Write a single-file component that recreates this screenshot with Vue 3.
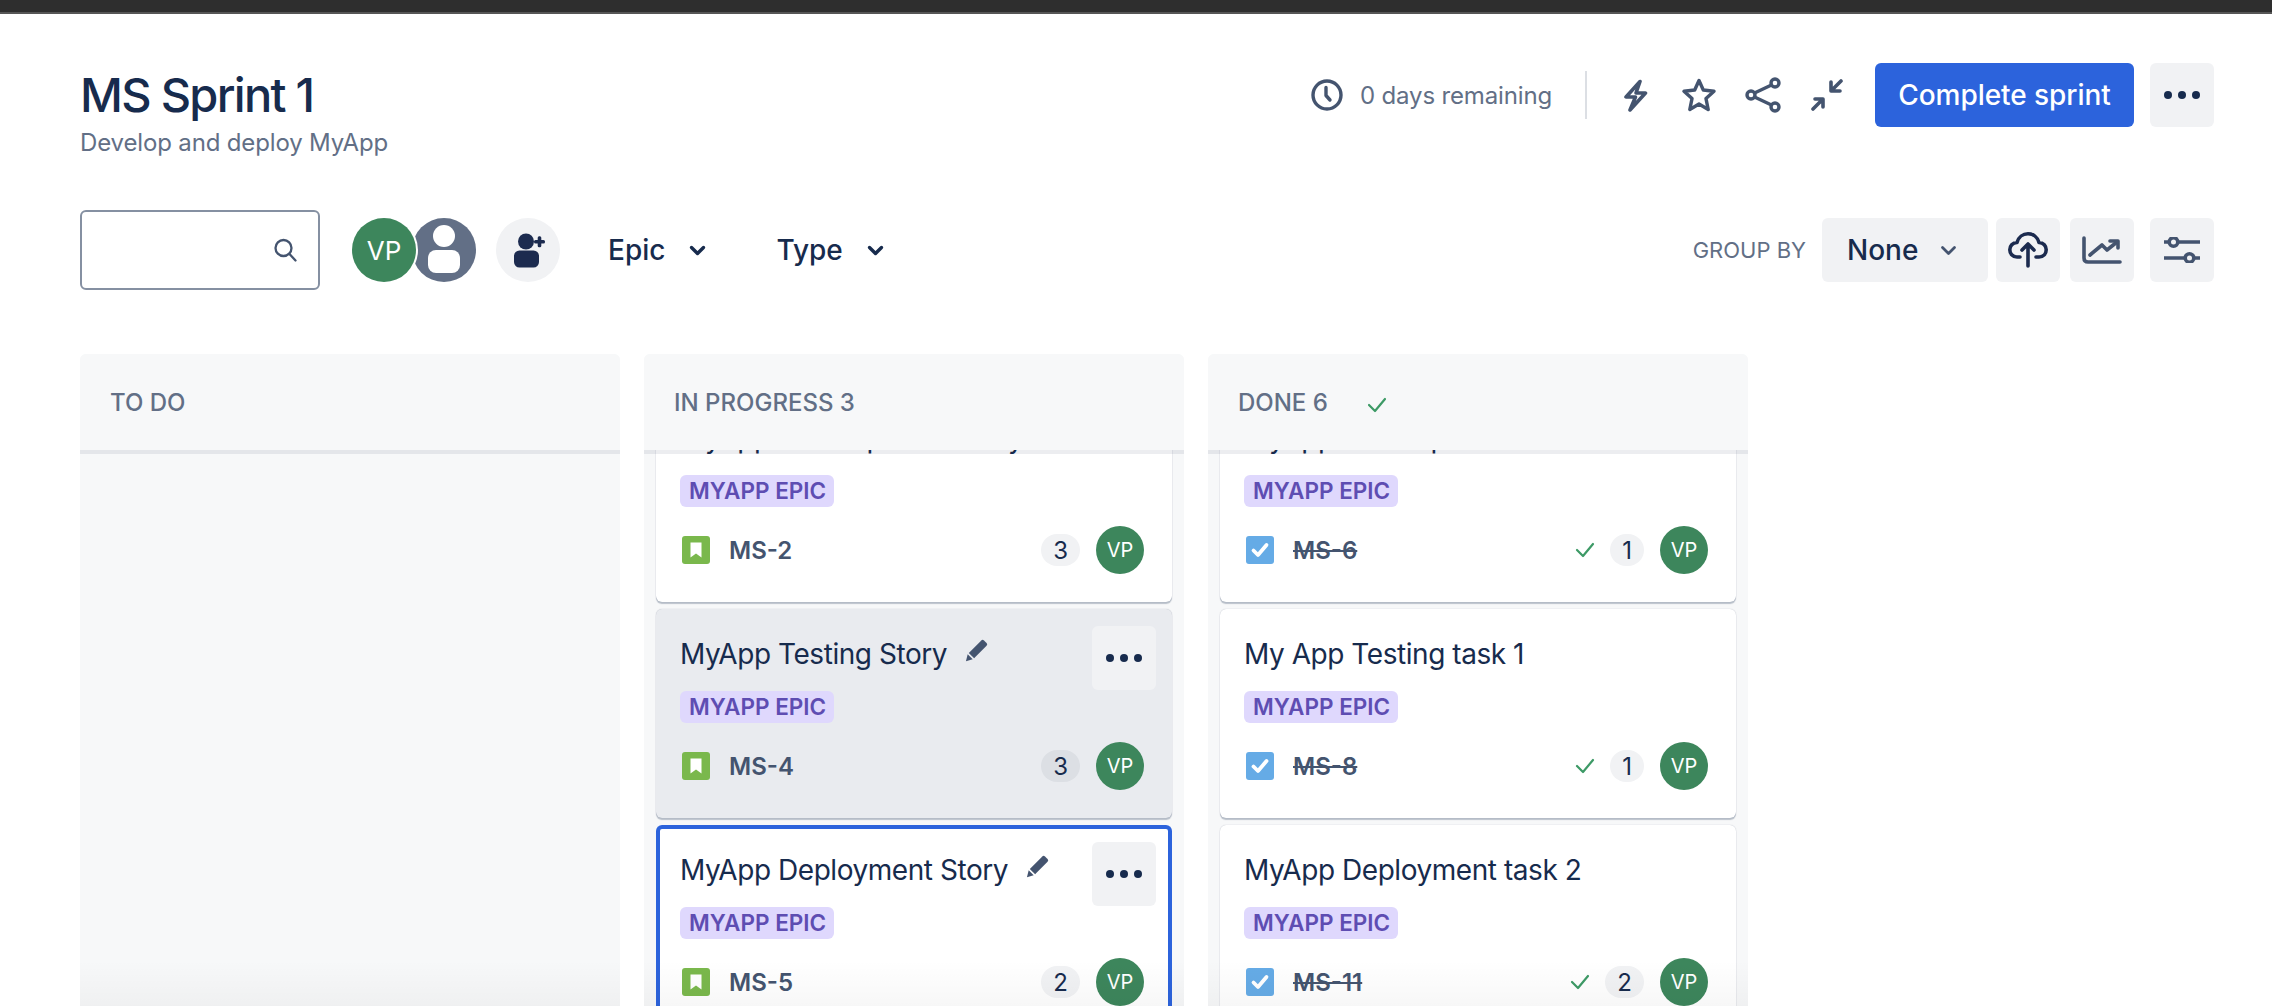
<script setup>
const cols = [
  { name: 'TO DO', done: false, cards: [] },
  {
    name: 'IN PROGRESS 3',
    done: false,
    cards: [
      { title: 'MyApp Development Story', key: 'MS-2', count: 3, type: 'story' },
      { title: 'MyApp Testing Story', key: 'MS-4', count: 3, type: 'story', state: 'hover' },
      { title: 'MyApp Deployment Story', key: 'MS-5', count: 2, type: 'story', state: 'selected' },
    ],
  },
  {
    name: 'DONE 6',
    done: true,
    cards: [
      { title: 'MyApp Development task 1', key: 'MS-6', count: 1, type: 'task' },
      { title: 'My App Testing task 1', key: 'MS-8', count: 1, type: 'task' },
      { title: 'MyApp Deployment task 2', key: 'MS-11', count: 2, type: 'task' },
    ],
  },
]
</script>

<template>
  <div class="page">
    <div class="topbar"></div>

    <header class="head">
      <div>
        <h1 class="title">MS Sprint 1</h1>
        <p class="sub">Develop and deploy MyApp</p>
      </div>
      <div class="head-right">
        <svg class="i-clock" viewBox="0 0 32 32" fill="none" stroke="#44546f" stroke-width="3.4" stroke-linecap="round" stroke-linejoin="round">
          <circle cx="16" cy="16" r="14" /><path d="M15 8.500V16.500L19 21" />
        </svg>
        <span class="remaining">0 days remaining</span>
        <span class="divider"></span>
        <svg class="i-bolt" viewBox="0 0 25 33" fill="none" stroke="#44546f" stroke-width="3.600" stroke-linejoin="round" stroke-linecap="round">
          <path d="M17 2.500 3 18h9.500L7 31 22.500 14H13z" />
        </svg>
        <svg class="i-star" viewBox="0 0 34 34" fill="none" stroke="#44546f" stroke-width="3.400" stroke-linejoin="round">
          <path d="M17 2.500 21.300 12 32 13.300 24 20.600 26.200 31.500 17 26 7.800 31.500 10 20.600 2 13.300 12.700 12z" />
        </svg>
        <svg class="i-share" viewBox="0 0 36 36" fill="none" stroke="#44546f" stroke-width="3.400">
          <circle cx="6" cy="18" r="4" /><circle cx="30" cy="6" r="4" /><circle cx="30" cy="30" r="4" />
          <path d="M9.500 16 26.500 8M9.500 20 26.500 28" />
        </svg>
        <svg class="i-collapse" viewBox="0 0 32 32" fill="none" stroke="#44546f" stroke-width="3.600" stroke-linecap="round" stroke-linejoin="round">
          <path d="M30 2 21 11M20 3v9h9M2 30 11 21M4 20h8v8" />
        </svg>
        <button class="primary">Complete sprint</button>
        <button class="square more">
          <svg viewBox="0 0 36 8" class="dots"><circle cx="4" cy="4" r="4" /><circle cx="18" cy="4" r="4" /><circle cx="32" cy="4" r="4" /></svg>
        </button>
      </div>
    </header>

    <div class="toolbar">
      <div class="search">
        <svg viewBox="0 0 24 24" fill="none" stroke="#44546f" stroke-width="2.300" stroke-linecap="round">
          <circle cx="10.500" cy="10" r="8" /><path d="m16.500 16 6 6.500" />
        </svg>
      </div>
      <div class="avatars">
        <span class="av-vp">VP</span>
        <span class="av-user">
          <svg viewBox="0 0 64 64" fill="#fff">
            <circle cx="32" cy="18" r="11" /><rect x="16" y="32" width="32" height="23" rx="8" />
          </svg>
        </span>
      </div>
      <span class="add">
        <svg viewBox="0 0 34 36" fill="#1c2b4f">
          <circle cx="15" cy="9.500" r="8" /><rect x="3" y="18.500" width="25" height="17" rx="5.500" />
          <rect x="23" y="8" width="11" height="3.600" rx="1.500" /><rect x="26.700" y="4.300" width="3.600" height="11" rx="1.500" />
        </svg>
      </span>
      <span class="filter epic">Epic
        <svg class="chev" viewBox="0 0 17 11" fill="none" stroke="#172b4d" stroke-width="3.400" stroke-linecap="round" stroke-linejoin="round"><path d="m2.500 2.500 6 6 6-6" /></svg>
      </span>
      <span class="filter type">Type
        <svg class="chev" viewBox="0 0 17 11" fill="none" stroke="#172b4d" stroke-width="3.400" stroke-linecap="round" stroke-linejoin="round"><path d="m2.500 2.500 6 6 6-6" /></svg>
      </span>
      <div class="toolbar-right">
        <span class="groupby">GROUP BY</span>
        <button class="none">None
          <svg class="chev" viewBox="0 0 17 11" fill="none" stroke="#44546f" stroke-width="2.800" stroke-linecap="round" stroke-linejoin="round"><path d="m2.500 2.500 6 6 6-6" /></svg>
        </button>
        <button class="square upload">
          <svg viewBox="0 0 40 36" fill="none" stroke="#1c2b4f" stroke-width="3.600" stroke-linecap="round" stroke-linejoin="round">
            <path d="M12 25H9C4.500 25 1.800 21.500 1.800 17.800S4.500 10.500 9 10.500C10.500 5 15 1.800 20 1.800 25 1.800 29.500 5 31 10.500 35.500 10.500 38.200 14 38.200 17.800S35.500 25 31 25H28" />
            <path d="M20 34V12.500M14 18 20 12 26 18" />
          </svg>
        </button>
        <button class="square chart">
          <svg viewBox="0 0 40 28" fill="none" stroke="#44546f" stroke-width="3.600" stroke-linecap="round" stroke-linejoin="round">
            <path d="M2 2V22Q2 26 6 26H38" /><path d="M8 19 20 9 25 14 35 6" /><path d="M28 5H36V12" />
          </svg>
        </button>
        <button class="square sliders">
          <svg viewBox="0 0 36 26" fill="none" stroke="#44546f" stroke-width="3.600">
            <path d="M0 5H5M14 5H36M0 21H21M30 21H36" /><circle cx="9.500" cy="5" r="4.300" /><circle cx="25.500" cy="21" r="4.300" />
          </svg>
        </button>
      </div>
    </div>

    <main class="board">
      <section v-for="col in cols" :key="col.name" class="col">
        <div class="col-head">
          <span>{{ col.name }}</span>
          <svg v-if="col.done" class="col-check" viewBox="0 0 20 16" fill="none" stroke="#3d9a66" stroke-width="2.200" stroke-linecap="round" stroke-linejoin="round"><path d="m2 8 6 6L18 2" /></svg>
        </div>
        <div class="list">
          <article v-for="card in col.cards" :key="card.key" class="card" :class="card.state">
            <div class="card-title">
              <span>{{ card.title }}</span>
              <svg v-if="card.state" class="pencil" viewBox="0 0 24 24" fill="#44546f">
                <path d="M17 1.500a2 2 0 0 1 2.800 0l2.700 2.700a2 2 0 0 1 0 2.800L9.500 20 4 14.500z" /><path d="M2.800 16 8 21.200 1 23.200z" />
              </svg>
            </div>
            <button v-if="card.state" class="card-more">
              <svg viewBox="0 0 36 8" class="dots"><circle cx="4" cy="4" r="4" /><circle cx="18" cy="4" r="4" /><circle cx="32" cy="4" r="4" /></svg>
            </button>
            <span class="tag">MYAPP EPIC</span>
            <div class="foot">
              <svg class="type-icon" viewBox="0 0 28 28">
                <template v-if="card.type === 'story'">
                  <rect width="28" height="28" rx="3" fill="#7ab84c" />
                  <path d="M8.500 6.500h11v15L14 17.500l-5.500 4z" fill="#fff" />
                </template>
                <template v-else>
                  <rect width="28" height="28" rx="3" fill="#65abe6" />
                  <path d="m7.500 14.500 4.500 4.500 8.500-10" fill="none" stroke="#fff" stroke-width="3.800" stroke-linecap="round" stroke-linejoin="round" />
                </template>
              </svg>
              <span class="key" :class="{ struck: card.type === 'task' }">{{ card.key }}</span>
              <svg v-if="card.type === 'task'" class="row-check" viewBox="0 0 20 16" fill="none" stroke="#3d9a66" stroke-width="2.200" stroke-linecap="round" stroke-linejoin="round"><path d="m2 8 6 6L18 2" /></svg>
              <span class="count" :class="{ first: card.type !== 'task' }">{{ card.count }}</span>
              <span class="av">VP</span>
            </div>
          </article>
        </div>
      </section>
    </main>
  </div>
</template>

<style>
html, body { margin: 0; height: 100%; overflow: hidden; background: #fff; }
</style>

<style scoped>
.page {
  position: relative;
  height: 1006px;
  overflow: hidden;
  font-family: Inter, "Liberation Sans", sans-serif;
  color: #172b4d;
  background: #fff;
}
button { font-family: inherit; border: 0; cursor: pointer; padding: 0; }
.topbar { height: 12px; background: #2e2e2e; border-bottom: 2px solid #565656; }

.head { display: flex; justify-content: space-between; padding: 49px 58px 0 80px; }
.title { margin: 0; font-size: 47px; line-height: 64px; font-weight: 500; letter-spacing: -1.7px; color: #172b4d; }
.sub { margin: 0; font-size: 24px; line-height: 32px; letter-spacing: -0.15px; color: #626f86; }
.head-right { display: flex; align-items: center; height: 64px; }
.i-clock { width: 32px; height: 32px; }
.remaining { margin-left: 17px; font-size: 24px; letter-spacing: -0.15px; color: #626f86; }
.divider { width: 2px; height: 48px; margin: 0 36px 0 33px; background: #dcdfe4; }
.i-bolt { width: 25px; height: 33px; }
.i-star { width: 34px; height: 34px; margin-left: 34px; }
.i-share { width: 36px; height: 36px; margin-left: 29px; }
.i-collapse { width: 32px; height: 32px; margin-left: 30px; }
.primary {
  width: 259px; height: 64px; margin-left: 32px;
  border-radius: 6px; background: #2c63dc; color: #fff;
  font-size: 28px; font-weight: 500; letter-spacing: -0.05px;
}
.square { display: flex; align-items: center; justify-content: center; height: 64px; border-radius: 6px; background: #f1f2f4; }
.more { width: 64px; margin-left: 16px; }
.dots { width: 36px; height: 8px; fill: #172b4d; }

.toolbar { display: flex; align-items: center; height: 80px; margin-top: 51px; padding: 0 58px 0 80px; }
.search {
  box-sizing: border-box; width: 240px; height: 80px;
  display: flex; align-items: center; justify-content: flex-end;
  padding-right: 20px;
  border: 2px solid #8590a2; border-radius: 6px;
}
.search svg { width: 24px; height: 24px; margin-right: 1px; }
.avatars { display: flex; margin-left: 32px; }
.av-vp {
  position: relative; z-index: 1;
  display: flex; align-items: center; justify-content: center;
  width: 64px; height: 64px; border-radius: 50%;
  background: #3d865c; color: #fff; font-size: 26px;
  box-shadow: 0 0 0 2px #fff;
}
.av-user { width: 64px; height: 64px; margin-left: -4px; border-radius: 50%; background: #626f86; overflow: hidden; }
.av-user svg { display: block; width: 64px; height: 64px; }
.add { display: flex; align-items: center; justify-content: center; width: 64px; height: 64px; margin-left: 20px; border-radius: 50%; background: #f1f2f4; }
.add svg { width: 34px; height: 36px; }
.filter { display: flex; align-items: center; font-size: 28px; font-weight: 500; color: #172b4d; }
.epic { margin-left: 48px; }
.type { margin-left: 70px; }
.chev { width: 17px; height: 11px; margin-left: 24px; }
.toolbar-right { display: flex; align-items: center; margin-left: auto; }
.groupby { font-size: 22px; color: #626f86; margin-right: 16px; }
.none {
  display: flex; align-items: center; justify-content: space-between;
  width: 166px; height: 64px; padding: 0 31px 0 25px;
  box-sizing: border-box;
  border-radius: 6px; background: #f1f2f4; color: #172b4d;
  font-size: 28px; font-weight: 500;
}
.none .chev { margin-left: 0; }
.upload { width: 64px; margin-left: 8px; }
.upload svg { width: 40px; height: 36px; }
.chart { width: 64px; margin-left: 10px; }
.chart svg { width: 40px; height: 28px; }
.sliders { width: 64px; margin-left: 16px; }
.sliders svg { width: 36px; height: 26px; }

.board { display: flex; gap: 24px; margin-top: 64px; padding-left: 80px; }
.col { position: relative; width: 540px; height: 652px; background: #f7f8f9; border-radius: 6px 6px 0 0; overflow: hidden; }
.col::after {
  content: ""; position: absolute; left: 0; right: 0; bottom: 0; height: 46px; z-index: 3;
  background: linear-gradient(rgba(0, 0, 0, 0), rgba(0, 0, 0, 0.03));
  pointer-events: none;
}
.col-head {
  position: relative; z-index: 2;
  box-sizing: border-box; height: 100px;
  display: flex; align-items: flex-start;
  padding: 34px 0 0 30px;
  background: #f7f8f9; background-clip: padding-box;
  border-bottom: 4px solid rgba(9, 30, 66, 0.08);
  font-size: 24px; line-height: 29px; font-weight: 500; color: #626f86;
}
.col-check { width: 20px; height: 16px; margin: 9px 0 0 39px; }
.list { display: flex; flex-direction: column; gap: 7px; margin-top: -61px; padding: 0 12px; }
.card {
  position: relative; box-sizing: border-box; height: 209px;
  padding: 25px 28px 28px 24px;
  border-radius: 6px; background: #fff;
  box-shadow: 0 2px 1px rgba(9, 30, 66, 0.25), 0 0 1px rgba(9, 30, 66, 0.31);
}
.card.hover { background: #e9ebef; }
.card.selected { box-shadow: inset 0 0 0 4px #2c63dc; }
.card-title { display: flex; align-items: flex-start; height: 40px; margin-bottom: 17px; font-size: 28px; line-height: 40px; letter-spacing: -0.45px; color: #172b4d; white-space: nowrap; }
.pencil { width: 23px; height: 23px; margin: 5px 0 0 18px; }
.card-more {
  position: absolute; top: 17px; right: 16px;
  display: flex; align-items: center; justify-content: center;
  width: 64px; height: 64px; border-radius: 6px; background: #f1f2f4;
}
.tag {
  display: inline-block; vertical-align: top; box-sizing: border-box;
  height: 32px; padding: 0 8px 0 9px; line-height: 32px;
  border-radius: 6px; background: #dfd8fd; color: #5e4db2;
  font-size: 22.5px; font-weight: 600; white-space: nowrap;
}
.foot { display: flex; align-items: center; height: 48px; margin-top: 19px; }
.type-icon { width: 28px; height: 28px; margin-left: 2px; }
.key { margin-left: 19px; font-size: 24px; font-weight: 600; color: #44546f; }
.struck { text-decoration: line-through; }
.row-check { width: 20px; height: 16px; margin-left: auto; }
.count {
  height: 32px; margin-left: 15px; padding: 0 12px; box-sizing: border-box;
  display: flex; align-items: center; justify-content: center;
  border-radius: 16px; background: #f1f2f4; color: #172b4d; font-size: 24px;
}
.card.hover .count { background: #dcdfe4; }
.count.first { margin-left: auto; }
.av {
  display: flex; align-items: center; justify-content: center;
  width: 48px; height: 48px; margin-left: 16px; border-radius: 50%;
  background: #3d865c; color: #fff; font-size: 20px;
}
</style>
